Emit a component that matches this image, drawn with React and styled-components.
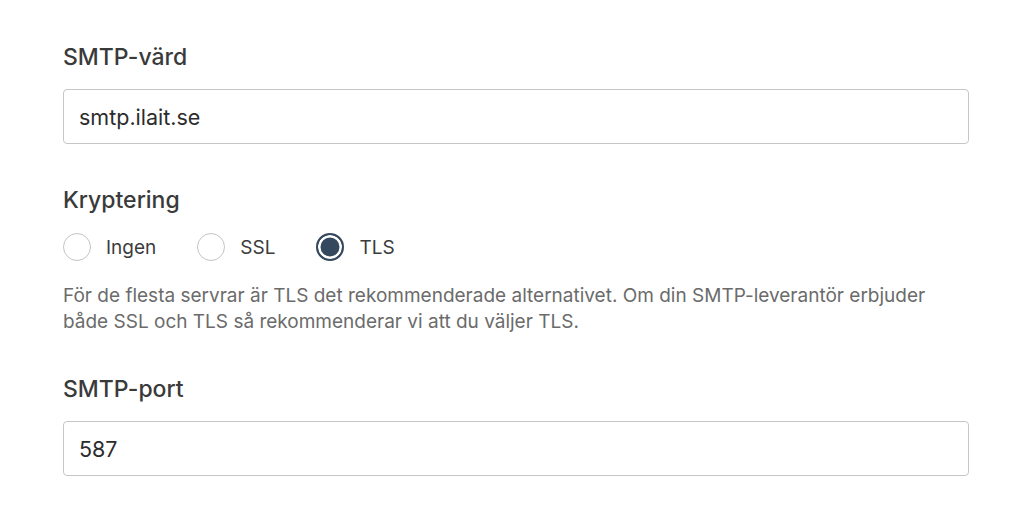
import React from "react";
import styled, { createGlobalStyle } from "styled-components";

const GlobalStyle = createGlobalStyle`
  body {
    margin: 0;
    background: #fff;
    font-family: Inter, "Liberation Sans", Arial, sans-serif;
  }
`;

const Form = styled.div`
  padding: 42px 55px 0 63px;
  width: 906px;
`;

const Field = styled.div`
  margin-bottom: ${(p) => p.$gap || 0}px;
`;

const Label = styled.div`
  font-size: 23px;
  font-weight: 500;
  line-height: 30px;
  color: #3a3a3a;
  margin-bottom: 17px;
`;

const Input = styled.input`
  box-sizing: border-box;
  display: block;
  width: 906px;
  height: 55px;
  padding: 0 15px;
  border: 1px solid #c6c6c6;
  border-radius: 4px;
  font-family: inherit;
  font-size: 21.5px;
  color: #2c2c2c;
  outline: none;
`;

const RadioRow = styled.div`
  display: flex;
  align-items: center;
  gap: 41px;
  height: 30px;
  margin-bottom: 21px;
`;

const RadioItem = styled.label`
  display: flex;
  align-items: center;
  gap: 15px;
  font-size: 19px;
  color: #3c3c3c;
`;

const Circle = styled.span`
  box-sizing: border-box;
  width: 28px;
  height: 28px;
  border-radius: 50%;
  border: ${(p) => (p.$on ? "2px solid #34495e" : "1.5px solid #c4c4c4")};
  background: ${(p) => (p.$on ? "#34495e" : "#fff")};
  box-shadow: ${(p) => (p.$on ? "inset 0 0 0 2.5px #fff" : "none")};
`;

const Help = styled.p`
  margin: 0 0 39px;
  font-size: 19px;
  line-height: 26px;
  color: #6b6b6b;
`;

const Radio = ({ label, on }) => (
  <RadioItem>
    <Circle $on={on} />
    {label}
  </RadioItem>
);

export default function App() {
  return (
    <>
      <GlobalStyle />
      <Form>
        <Field $gap={41}>
          <Label>SMTP-värd</Label>
          <Input defaultValue="smtp.ilait.se" />
        </Field>
        <Field>
          <Label>Kryptering</Label>
          <RadioRow>
            <Radio label="Ingen" />
            <Radio label="SSL" />
            <Radio label="TLS" on />
          </RadioRow>
          <Help>
            För de flesta servrar är TLS det rekommenderade alternativet. Om din
            SMTP-leverantör erbjuder
            <br />
            både SSL och TLS så rekommenderar vi att du väljer TLS.
          </Help>
        </Field>
        <Field>
          <Label>SMTP-port</Label>
          <Input defaultValue="587" />
        </Field>
      </Form>
    </>
  );
}
